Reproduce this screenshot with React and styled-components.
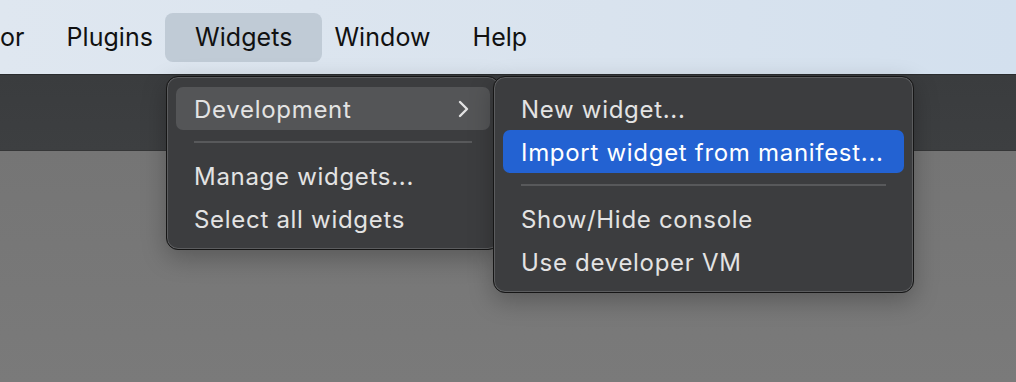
import styled, { createGlobalStyle } from "styled-components";

const GlobalStyle = createGlobalStyle`
    html, body {
        margin: 0;
        padding: 0;
        width: 1016px;
        height: 382px;
        overflow: hidden;
        font-family: Inter, "Liberation Sans", sans-serif;
    }
`

const Page = styled.div`
    position: relative;
    display: flex;
    flex-direction: column;
    width: 1016px;
    height: 382px;
    overflow: hidden;
`

const MenuBar = styled.div`
    display: flex;
    align-items: center;
    height: 75px;
    background: linear-gradient(90deg, #dfe7f0 0%, #d9e3ee 60%, #d3e0ee 100%);
    border-bottom: 1px solid #2a2c2e;
    box-sizing: border-box;
`

const BarItem = styled.div`
    display: flex;
    align-items: center;
    height: 49px;
    padding: 0 ${(p) => (p.$active ? "30px" : "21px")};
    margin: 0 ${(p) => (p.$active ? "-9px" : "0")};
    border-radius: 8px;
    background: ${(p) => (p.$active ? "#c0cbd6" : "transparent")};
    color: #111;
    font-size: 25px;
    letter-spacing: 0.05px;
    &:first-child {
        padding-left: 0;
    }
`

const Toolbar = styled.div`
    height: 75px;
    background: linear-gradient(180deg, #3a3c3e 0%, #3d3f41 100%);
    border-bottom: 1px solid #353637;
`

const Canvas = styled.div`
    flex: 1;
    background: linear-gradient(180deg, #757575 0%, #7a7a7a 100%);
`

const Dropdowns = styled.div`
    position: absolute;
    top: 76px;
    left: 166px;
    display: flex;
    align-items: flex-start;
`

const Menu = styled.div`
    display: flex;
    flex-direction: column;
    width: ${(p) => p.$width}px;
    padding: 10px 9px 9px;
    box-sizing: border-box;
    background: #3c3d3f;
    border: 1px solid #161616;
    border-radius: 12px;
    box-shadow: inset 0 0 0 1px #5c5d5f, 0 8px 24px rgba(0, 0, 0, 0.25);
    margin-left: ${(p) => p.$overlap || 0}px;
    z-index: ${(p) => p.$layer || 1};
`

const Item = styled.div`
    display: flex;
    align-items: center;
    justify-content: space-between;
    height: 43px;
    padding: 1px 20px 0 18px;
    box-sizing: border-box;
    border-radius: 7px;
    font-size: 24px;
    letter-spacing: 0.7px;
    color: ${(p) => (p.$selected ? "#ffffff" : "#e3e3e3")};
    background: ${(p) =>
        p.$selected ? "#2362d2" : p.$open ? "#545557" : "transparent"};
`

const Separator = styled.div`
    height: 2px;
    margin: 11px 18px;
    background: #58595b;
`

const Chevron = () => (
    <svg width="12" height="20" viewBox="0 0 12 20">
        <path d="M2 3 L9 10 L2 17" fill="none" stroke="#e3e3e3" strokeWidth="2.4" strokeLinecap="round" strokeLinejoin="round" />
    </svg>
)

const App = () => {
    return (
        <Page>
            <GlobalStyle />
            <MenuBar>
                <BarItem>or</BarItem>
                <BarItem>Plugins</BarItem>
                <BarItem $active>Widgets</BarItem>
                <BarItem>Window</BarItem>
                <BarItem>Help</BarItem>
            </MenuBar>
            <Toolbar />
            <Canvas />
            <Dropdowns>
                <Menu $width={334}>
                    <Item $open>
                        Development
                        <Chevron />
                    </Item>
                    <Separator />
                    <Item>Manage widgets...</Item>
                    <Item>Select all widgets</Item>
                </Menu>
                <Menu $width={421} $overlap={-7} $layer={2}>
                    <Item>New widget...</Item>
                    <Item $selected>Import widget from manifest...</Item>
                    <Separator />
                    <Item>Show/Hide console</Item>
                    <Item>Use developer VM</Item>
                </Menu>
            </Dropdowns>
        </Page>
    )
}

export default App;
